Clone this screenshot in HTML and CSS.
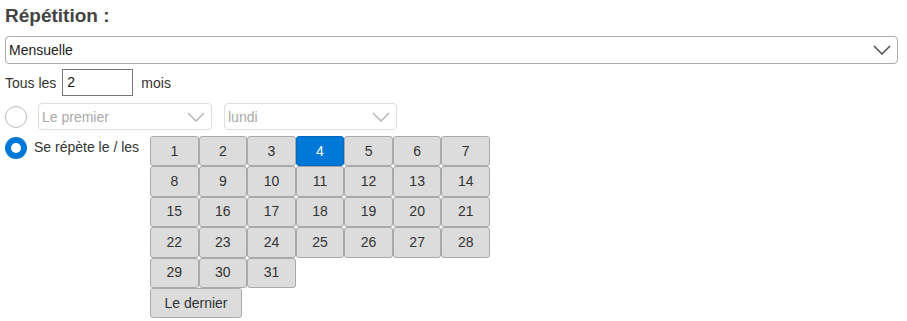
FILE: index.html
```html
<!DOCTYPE html>
<html lang="fr">
<head>
<meta charset="utf-8">
<link rel="stylesheet" href="styles.css">
</head>
<body>
<div class="page">
  <h2 class="title">Répétition :</h2>
  <div class="select main">
    <span>Mensuelle</span>
    <svg class="chev" width="18" height="10" viewBox="0 0 18 10"><path d="M1 1 L9 9 L17 1" fill="none" stroke="#555" stroke-width="1.6"/></svg>
  </div>
  <div class="row every">
    <span>Tous les</span>
    <div class="input">2</div>
    <span class="mois">mois</span>
  </div>
  <div class="row opt1">
    <span class="radio"></span>
    <div class="select dis first">
      <span>Le premier</span>
      <svg class="chev" width="18" height="10" viewBox="0 0 18 10"><path d="M1 1 L9 9 L17 1" fill="none" stroke="#bbb" stroke-width="1.6"/></svg>
    </div>
    <div class="select dis day">
      <span>lundi</span>
      <svg class="chev" width="18" height="10" viewBox="0 0 18 10"><path d="M1 1 L9 9 L17 1" fill="none" stroke="#bbb" stroke-width="1.6"/></svg>
    </div>
  </div>
  <div class="row opt2">
    <span class="radio on"></span>
    <span class="label">Se répète le / les</span>
    <div class="days">
      <div class="grid">
        <button class="d">1</button><button class="d">2</button><button class="d">3</button><button class="d sel">4</button><button class="d">5</button><button class="d">6</button><button class="d">7</button>
        <button class="d">8</button><button class="d">9</button><button class="d">10</button><button class="d">11</button><button class="d">12</button><button class="d">13</button><button class="d">14</button>
        <button class="d">15</button><button class="d">16</button><button class="d">17</button><button class="d">18</button><button class="d">19</button><button class="d">20</button><button class="d">21</button>
        <button class="d">22</button><button class="d">23</button><button class="d">24</button><button class="d">25</button><button class="d">26</button><button class="d">27</button><button class="d">28</button>
        <button class="d">29</button><button class="d">30</button><button class="d">31</button>
      </div>
      <button class="d last">Le dernier</button>
    </div>
  </div>
</div>
</body>
</html>
```
FILE: styles.css
```css
* { box-sizing: border-box; }
html, body { margin: 0; padding: 0; background: #fff; }
body { font-family: "Liberation Sans", Arial, sans-serif; font-size: 14px; color: #333; }
.page { padding: 4px 9px 0 5px; }
.title { margin: 0; font-size: 19px; font-weight: bold; color: #444; line-height: 24px; height: 32px; }
.select {
  display: flex; align-items: center; justify-content: space-between;
  border: 1px solid #aaa; border-radius: 4px; height: 28px; padding: 0 6px 0 3px;
  background: #fff; color: #222;
}
.select.main { width: 893px; }
.chev { display: block; }
.row { display: flex; align-items: center; }
.every { margin-top: 5px; height: 27px; }
.input { width: 71px; height: 27px; border: 1px solid #777; margin-left: 6px; padding: 3px 4px; line-height: 19px; color: #111; }
.mois { margin-left: 8px; }
.opt1 { margin-top: 7px; }
.radio { width: 22px; height: 22px; border-radius: 50%; border: 1px solid #bbb; background: #fff; flex: none; }
.radio.on { border: 6px solid #0078d7; }
.select.dis { border-color: #ddd; color: #aaa; height: 27px; }
.select.first { width: 174px; margin-left: 11px; }
.select.day { width: 173px; margin-left: 12px; }
.opt2 { margin-top: 6px; align-items: flex-start; }
.opt2 .radio { margin-top: 1px; }
.label { margin-left: 7px; margin-top: 3px; width: 116px; flex: none; }
.days { width: 340px; }
.grid { display: grid; grid-template-columns: repeat(7, 1fr); }
.d {
  font-family: "Liberation Sans", Arial, sans-serif; font-size: 14px; color: #333;
  height: 30.4px; border: 1px solid #a9a9a9; border-radius: 3px; background: #dcdcdc;
  padding: 0 0 1px; margin: 0;
}
.d.sel { background: #0078d7; border-color: #0067c0; color: #fff; }
.d.last { width: 92px; display: block; }
```
